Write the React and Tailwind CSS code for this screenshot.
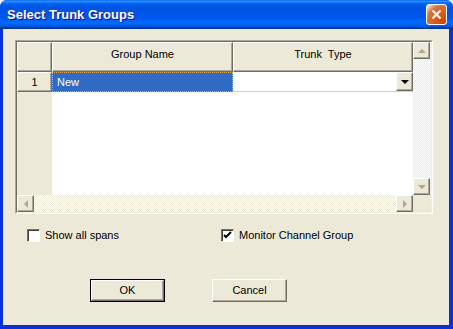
import React from 'react';

const font = { fontFamily: '"Liberation Sans", Arial, sans-serif' };

// raised 3D box used for header cells, scroll arrows and buttons
const raised = "border border-t-white border-l-white border-r-[#716F64] border-b-[#716F64] shadow-[inset_-1px_-1px_0_#ACA899]";
const track = "bg-[repeating-conic-gradient(#ffffff_0_25%,#ECE9D8_0_50%)] bg-[length:2px_2px]";

function Arrow({ dir, color = "#ACA899" }) {
    const pts = {
        up: "0,4 4,0 8,4",
        down: "0,0 8,0 4,4",
        left: "4,0 4,8 0,4",
        right: "0,0 0,8 4,4",
    }[dir];
    const vertical = dir === 'up' || dir === 'down';
    return (
        <svg width={vertical ? 8 : 4} height={vertical ? 4 : 8} viewBox={vertical ? "0 0 8 4" : "0 0 4 8"}>
            <polygon points={pts} fill={color} />
        </svg>
    );
}

function ScrollBtn({ dir }) {
    return (
        <div className={`w-[17px] h-[17px] bg-[#ECE9D8] flex items-center justify-center ${raised}`}>
            <Arrow dir={dir} />
        </div>
    );
}

function Checkbox({ checked, label }) {
    return (
        <div className="flex items-center gap-[5px]">
            <div className="w-[13px] h-[13px] bg-white border border-t-[#716F64] border-l-[#716F64] border-r-white border-b-white shadow-[inset_1px_1px_0_#404040] flex items-center justify-center">
                {checked && (
                    <svg width="9" height="9" viewBox="0 0 9 9">
                        <path d="M1 4 L3 6 L8 1" stroke="#000" strokeWidth="2" fill="none" />
                    </svg>
                )}
            </div>
            <span className="text-[11px] text-black leading-[13px]">{label}</span>
        </div>
    );
}

function App() {
    return (
        <div style={font} className="w-[453px] h-[329px] flex flex-col bg-[#0831D9] rounded-t-[7px] overflow-hidden">
            {/* Title bar */}
            <div className="h-[29px] shrink-0 flex items-center justify-between pl-[7px] pr-[6px] bg-[linear-gradient(to_bottom,#0058EE_0%,#3593FF_4%,#288EFF_6%,#127DFF_8%,#036FFC_10%,#0262EE_14%,#0057E5_20%,#0054E3_24%,#0055EB_56%,#005BF5_66%,#026AFE_76%,#0062EF_86%,#0052D6_92%,#0040AB_94%,#003092_100%)]">
                <span className="text-white font-bold text-[13px] [text-shadow:1px_1px_#0F1089]">Select Trunk Groups</span>
                <div className="w-[21px] h-[21px] rounded-[3px] border border-white flex items-center justify-center bg-[radial-gradient(circle_at_90%_90%,#CC4600_0%,#DC6527_55%,#CD7546_70%,#FFCCB2_90%,#ffffff_100%)]">
                    <svg width="11" height="11" viewBox="0 0 11 11">
                        <path d="M1.5 1.5 L9.5 9.5 M9.5 1.5 L1.5 9.5" stroke="#fff" strokeWidth="2.2" />
                    </svg>
                </div>
            </div>

            {/* Body */}
            <div className="flex-1 ml-[3px] mr-[4px] mb-[4px] bg-[#ECE9D8] flex flex-col">
                {/* Grid */}
                <div className="ml-[12px] mt-[11px] w-[418px] h-[174px] border border-t-[#ACA899] border-l-[#ACA899] border-r-white border-b-white">
                    <div className="w-full h-full border border-t-[#716F64] border-l-[#716F64] border-r-[#F1EFE2] border-b-[#F1EFE2] flex">
                        <div className="w-[396px] flex flex-col">
                            {/* header row */}
                            <div className="h-[30px] flex text-[11px] text-black">
                                <div className={`w-[35px] bg-[#ECE9D8] ${raised}`} />
                                <div className={`w-[181px] bg-[#ECE9D8] text-center pt-[3px] ${raised}`}>Group Name</div>
                                <div className={`w-[180px] bg-[#ECE9D8] text-center pt-[3px] whitespace-pre ${raised}`}>Trunk  Type</div>
                            </div>
                            {/* row 1 */}
                            <div className="h-[20px] flex text-[11px]">
                                <div className={`w-[35px] bg-[#ECE9D8] flex items-center justify-center ${raised}`}>1</div>
                                <div className="w-[181px] bg-[#316AC5] text-white flex items-center pl-[4px] border border-dotted border-[#E0B060]">New</div>
                                <div className="w-[180px] bg-white flex justify-end border-b border-[#D4D0C8]">
                                    <div className={`w-[17px] h-[19px] bg-[#ECE9D8] flex items-center justify-center ${raised}`}>
                                        <Arrow dir="down" color="#000" />
                                    </div>
                                </div>
                            </div>
                            {/* empty rows */}
                            <div className="flex-1 flex">
                                <div className="w-[35px] bg-[#ECE9D8]" />
                                <div className="flex-1 bg-white" />
                            </div>
                            {/* horizontal scrollbar */}
                            <div className={`h-[17px] flex ${track}`}>
                                <ScrollBtn dir="left" />
                                <div className="flex-1" />
                                <ScrollBtn dir="right" />
                            </div>
                        </div>
                        {/* vertical scrollbar */}
                        <div className="flex-1 flex flex-col">
                            <div className={`flex-1 flex flex-col ${track}`}>
                                <ScrollBtn dir="up" />
                                <div className="flex-1" />
                                <ScrollBtn dir="down" />
                            </div>
                            <div className="h-[17px] bg-[#ECE9D8]" />
                        </div>
                    </div>
                </div>

                {/* Options */}
                <div className="flex mt-[15px] ml-[24px]">
                    <div className="w-[194px]">
                        <Checkbox label="Show all spans" />
                    </div>
                    <Checkbox checked label="Monitor Channel Group" />
                </div>

                {/* Buttons */}
                <div className="flex mt-[37px] ml-[87px] gap-[47px] text-[11px] text-black">
                    <button className="w-[75px] h-[23px] border border-black bg-[#ECE9D8]">
                        <div className={`w-full h-full flex items-center justify-center ${raised}`}>OK</div>
                    </button>
                    <button className={`w-[75px] h-[23px] bg-[#ECE9D8] flex items-center justify-center ${raised}`}>Cancel</button>
                </div>
            </div>
        </div>
    );
}

export default App;
